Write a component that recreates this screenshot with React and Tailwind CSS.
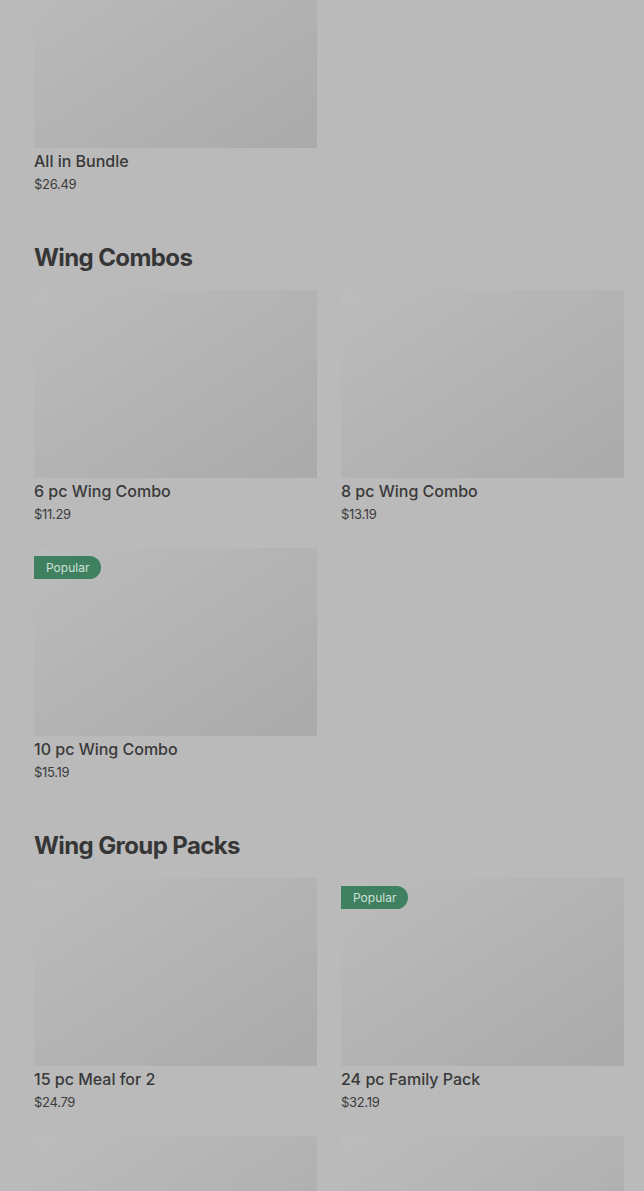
import React from 'react';

const sections = [
    { title: null, items: [{ name: 'All in Bundle', price: '$26.49' }] },
    {
        title: 'Wing Combos',
        items: [
            { name: '6 pc Wing Combo', price: '$11.29' },
            { name: '8 pc Wing Combo', price: '$13.19' },
            { name: '10 pc Wing Combo', price: '$15.19', popular: true },
        ],
    },
    {
        title: 'Wing Group Packs',
        items: [
            { name: '15 pc Meal for 2', price: '$24.79' },
            { name: '24 pc Family Pack', price: '$32.19', popular: true },
            { name: '', price: '' },
            { name: '', price: '' },
        ],
    },
];

function ItemCard({ item }) {
    return (
        <div className="flex flex-col">
            <div className="relative h-[188px] bg-gradient-to-br from-[#bcbcbc] to-[#aaaaaa]">
                {item.popular && (
                    <span className="absolute left-0 top-2 h-[23px] px-3 flex items-center rounded-r-full bg-[#3f8061] text-[#cfe2d7] text-[12px]">
                        Popular
                    </span>
                )}
            </div>
            <p className="mt-[3px] text-[16px] leading-[20px] font-medium text-[#393939]">{item.name}</p>
            <p className="mt-[3px] text-[13px] leading-[20px] text-[#3c3c3c] tracking-[-0.3px]">{item.price}</p>
        </div>
    );
}

export default function App() {
    return (
        <div className="min-h-[1191px] bg-[#bababa] pl-[34px] pr-[20px] overflow-hidden" style={{ fontFamily: 'Inter, "Noto Sans", sans-serif' }}>
            {sections.map((s, i) => (
                <section key={i} className={i === 0 ? '-mt-[40px]' : 'mt-[49px]'}>
                    {s.title && (
                        <h2 className="mb-[17px] text-[24px] leading-[30px] font-bold tracking-[-0.6px] text-[#363636]">{s.title}</h2>
                    )}
                    <div className="grid grid-cols-2 gap-x-6 gap-y-6">
                        {s.items.map((item, j) => <ItemCard key={j} item={item} />)}
                    </div>
                </section>
            ))}
        </div>
    );
}
